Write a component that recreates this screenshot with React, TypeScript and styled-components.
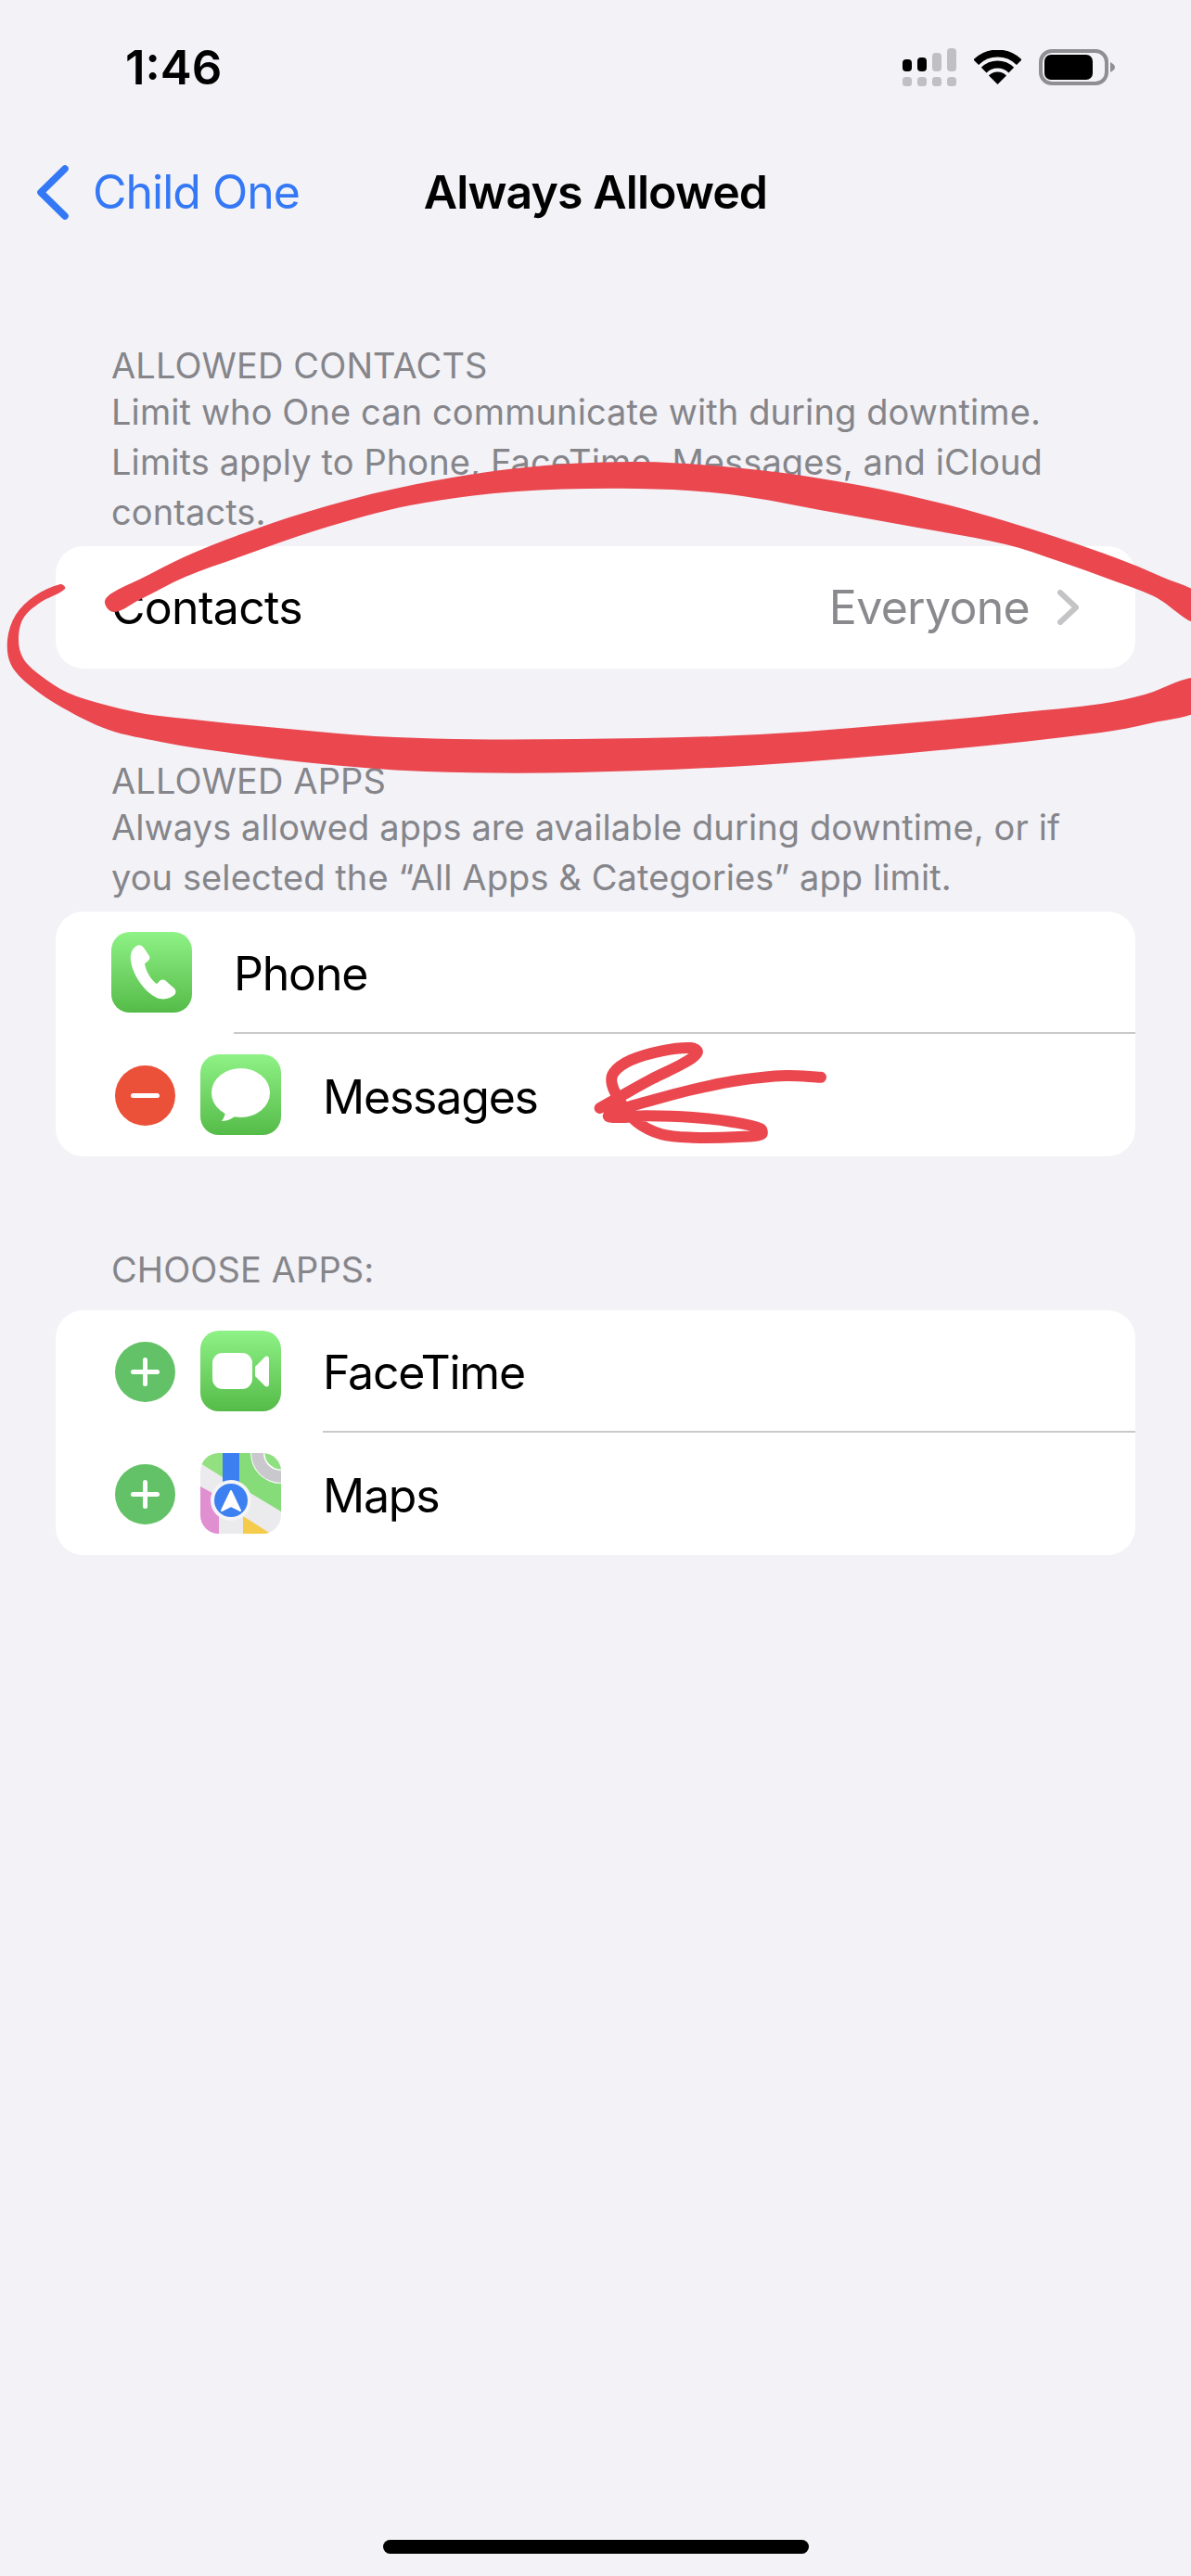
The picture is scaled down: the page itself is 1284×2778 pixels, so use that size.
import React from "react";
import styled, { createGlobalStyle } from "styled-components";

const Global = createGlobalStyle`
  html, body { margin: 0; padding: 0; background: #f2f2f7; }
  body { font-family: Inter, "Liberation Sans", sans-serif; -webkit-font-smoothing: antialiased; }
`;

const Page = styled.div`
  position: relative;
  width: 1284px;
  height: 2778px;
  overflow: hidden;
  background: #f2f2f7;
  color: #000;
`;

const StatusBar = styled.div`
  height: 144px;
  display: flex;
  align-items: center;
  justify-content: space-between;
  padding: 0 82px 0 135px;
  box-sizing: border-box;
`;

const Time = styled.div`
  font-size: 51px;
  font-weight: 600;
`;

const StatusIcons = styled.div`
  display: flex;
  align-items: center;
  gap: 19px;
`;

const Nav = styled.div`
  height: 126px;
  display: grid;
  grid-template-columns: 1fr auto 1fr;
  align-items: center;
`;

const Back = styled.div`
  display: flex;
  align-items: center;
  gap: 26px;
  padding-left: 39px;
  font-size: 50px;
  letter-spacing: -1px;
  color: #3478f6;
`;

const Title = styled.div`
  font-size: 50px;
  font-weight: 600;
  letter-spacing: -0.9px;
`;

const Section = styled.section<{ $top: number }>`
  margin-top: ${(p) => p.$top}px;
`;

const Heading = styled.div<{ $gap?: number }>`
  padding-left: 120px;
  font-size: 38px;
  line-height: 48px;
  letter-spacing: 0.1px;
  color: #85858a;
  margin-bottom: ${(p) => p.$gap ?? -1}px;
`;

const Description = styled.div`
  padding-left: 120px;
  font-size: 38px;
  line-height: 54px;
  letter-spacing: 0.1px;
  color: #85858a;
  margin-bottom: 10px;
`;

const Card = styled.div`
  margin: 0 60px;
  background: #fff;
  border-radius: 30px;
  overflow: hidden;
`;

const ContactRow = styled.div`
  height: 132px;
  display: flex;
  align-items: center;
  justify-content: space-between;
  padding: 0 61px 0 60px;
  font-size: 50px;
  letter-spacing: -0.7px;
`;

const Value = styled.div`
  display: flex;
  align-items: center;
  gap: 30px;
  color: #8a8a8e;
`;

const Row = styled.div`
  height: 132px;
  display: flex;
  align-items: center;
  padding-left: 60px;
  font-size: 50px;
  letter-spacing: -1.2px;
`;

const RowBody = styled.div<{ $divided?: boolean }>`
  flex: 1;
  align-self: stretch;
  display: flex;
  align-items: center;
  margin-left: 45px;
  padding-top: 3px;
  box-sizing: border-box;
  border-bottom: ${(p) => (p.$divided ? "2px solid #c9c9cc" : "none")};
`;

const Badge = styled.div<{ $color: string; $plus?: boolean }>`
  position: relative;
  flex: none;
  width: 65px;
  height: 65px;
  margin: 0 27px 0 4px;
  border-radius: 50%;
  background: ${(p) => p.$color};

  &::before {
    content: "";
    position: absolute;
    left: 17px;
    top: 30px;
    width: 31px;
    height: 5px;
    border-radius: 3px;
    background: #fff;
  }

  &::after {
    content: "";
    display: ${(p) => (p.$plus ? "block" : "none")};
    position: absolute;
    left: 30px;
    top: 17px;
    width: 5px;
    height: 31px;
    border-radius: 3px;
    background: #fff;
  }
`;

const AppIcon = styled.svg`
  flex: none;
  width: 87px;
  height: 87px;
  display: block;
  margin-bottom: 1px;
`;

const Overlay = styled.svg`
  position: absolute;
  left: 0;
  top: 0;
  pointer-events: none;
`;

const HomeBar = styled.div`
  position: absolute;
  left: 413px;
  top: 2739px;
  width: 459px;
  height: 15px;
  border-radius: 8px;
  background: #000;
`;

type P = [number, number];

const smooth = (pts: P[], closed: boolean): string => {
  const n = pts.length;
  const at = (i: number): P =>
    closed ? pts[(i + n) % n] : pts[Math.max(0, Math.min(n - 1, i))];
  const dir = (a: P, b: P): P => {
    const l = Math.hypot(b[0] - a[0], b[1] - a[1]) || 1;
    return [(b[0] - a[0]) / l, (b[1] - a[1]) / l];
  };
  let d = `M${pts[0][0]} ${pts[0][1]}`;
  const last = closed ? n : n - 1;
  for (let i = 0; i < last; i++) {
    const a = at(i - 1), b = at(i), c = at(i + 1), e = at(i + 2);
    const len = Math.hypot(c[0] - b[0], c[1] - b[1]) / 3;
    const t1 = dir(a, c), t2 = dir(b, e);
    d += ` C${(b[0] + t1[0] * len).toFixed(1)} ${(b[1] + t1[1] * len).toFixed(1)} ${(c[0] - t2[0] * len).toFixed(1)} ${(c[1] - t2[1] * len).toFixed(1)} ${c[0]} ${c[1]}`;
  }
  return d + (closed ? " Z" : "");
};

const UPPER: P[] = [
  [113, 650], [120, 640], [150, 625], [200, 600], [260, 576], [328, 553], [426, 527], [557, 505],
  [688, 498], [819, 507], [925, 523], [1024, 545], [1084, 562], [1144, 581], [1204, 602], [1250, 621],
  [1300, 646], [1300, 675], [1244, 643], [1197, 625], [1144, 606], [1084, 587], [995, 570], [901, 553],
  [786, 533], [688, 527], [557, 530], [442, 545], [344, 571], [260, 600], [200, 622], [150, 647], [123, 660],
];

const LOWER: P[] = [
  [70, 635], [65, 630], [37, 643], [17, 663], [8, 690], [12, 717], [33, 740], [67, 763], [117, 787],
  [173, 800], [213, 807], [328, 822], [459, 832], [622, 833], [819, 825], [1024, 808], [1187, 790],
  [1240, 780], [1300, 762], [1300, 731], [1234, 749], [1187, 759], [1084, 770], [1024, 776], [819, 792], [622, 797],
  [426, 795], [246, 780], [200, 775], [157, 770], [113, 760], [73, 747], [43, 728], [25, 710], [20, 690],
  [25, 667], [43, 650],
];

const SCRIBBLE: P[] = ([
  [765, 155], [650, 150], [500, 165], [350, 195], [200, 235], [110, 262], [80, 283], [200, 280], [350, 285],
  [480, 300], [570, 322], [572, 340], [500, 348], [350, 350], [250, 340], [170, 300], [120, 240], [90, 180],
  [95, 140], [150, 100], [250, 70], [345, 60], [365, 75], [320, 110], [220, 160], [120, 215], [50, 255],
] as P[]).map(([x, y]) => [630 + x / 3, Math.round((1110 + y / 3) * 10) / 10] as P);

const CellIcon = () => (
  <svg width="58" height="41" viewBox="0 0 58 41">
    <rect x="0" y="12" width="10" height="13" rx="4" fill="#000" />
    <rect x="16" y="10" width="10" height="15" rx="4" fill="#000" />
    <rect x="32" y="5" width="10" height="20" rx="4" fill="#c0c0c4" />
    <rect x="48" y="0" width="10" height="25" rx="4" fill="#c0c0c4" />
    {[0, 16, 32, 48].map((x) => (
      <rect key={x} x={x} y="31" width="10" height="10" rx="3.5" fill="#c0c0c4" />
    ))}
  </svg>
);

const WifiIcon = () => (
  <svg width="51" height="37" viewBox="0 0 51 37">
    <path d="M2.2 13.2A33 33 0 0 1 48.8 13.2" fill="none" stroke="#000" strokeWidth="8" />
    <path d="M10.7 21.7A21 21 0 0 1 40.3 21.7" fill="none" stroke="#000" strokeWidth="8" />
    <path d="M25.5 37L16 27.5A13.5 13.5 0 0 1 35 27.5Z" fill="#000" />
  </svg>
);

const BatteryIcon = () => (
  <svg width="82" height="39" viewBox="0 0 82 39">
    <rect x="2" y="2" width="71" height="35" rx="12" fill="none" stroke="#8e8e93" strokeWidth="4" />
    <rect x="6" y="6" width="52" height="27" rx="7" fill="#000" />
    <path d="M77 14L80 16Q82 17.5 82 19.5Q82 21.5 80 23L77 25Z" fill="#8e8e93" />
  </svg>
);

const Grad = ({ id }: { id: string }) => (
  <defs>
    <linearGradient id={id} x1="0" y1="0" x2="0" y2="1">
      <stop offset="0" stopColor="#8ef286" />
      <stop offset="1" stopColor="#55bb48" />
    </linearGradient>
  </defs>
);

const PhoneIcon = () => (
  <AppIcon viewBox="0 0 87 87">
    <Grad id="g-phone" />
    <rect width="87" height="87" rx="20" fill="url(#g-phone)" />
    <path
      d="M26 16C23 18 20 23 21 31C23 46 35 64 49 71C56 74 63 72 68 68C70 66 70 63 68 61L59 53C57 51 54 51 52 53L49 56C43 52 37 42 36 34L39 32C41 30 42 28 41 26L35 17C33 14 29 13 26 16Z"
      fill="#fff"
    />
  </AppIcon>
);

const MessagesIcon = () => (
  <AppIcon viewBox="0 0 87 87">
    <Grad id="g-msg" />
    <rect width="87" height="87" rx="20" fill="url(#g-msg)" />
    <ellipse cx="43.5" cy="41.5" rx="31.5" ry="26.5" fill="#fff" />
    <path d="M27 60C27 66 25 69 23 72C29 72 35 69 38 66Z" fill="#fff" />
  </AppIcon>
);

const FaceTimeIcon = () => (
  <AppIcon viewBox="0 0 87 87">
    <Grad id="g-ft" />
    <rect width="87" height="87" rx="20" fill="url(#g-ft)" />
    <rect x="13" y="24" width="43" height="39" rx="11" fill="#fff" />
    <path d="M59 39L70 28C72 27 74 28 74 30V58C74 60 72 61 70 60L59 49Z" fill="#fff" />
  </AppIcon>
);

const MapsIcon = () => (
  <AppIcon viewBox="0 0 87 87">
    <defs>
      <clipPath id="maps-clip">
        <rect width="87" height="87" rx="20" />
      </clipPath>
    </defs>
    <g clipPath="url(#maps-clip)">
      <rect width="87" height="87" fill="#ebebee" />
      <path d="M0 0H24V26L0 11Z" fill="#92e07f" />
      <path d="M42 0H87V63L47 39L42 36Z" fill="#86dc78" />
      <circle cx="87" cy="0" r="33" fill="#fff" />
      <circle cx="87" cy="0" r="32" fill="#c9c9cd" />
      <circle cx="87" cy="0" r="19" fill="#fff" />
      <circle cx="87" cy="0" r="17.5" fill="#8fe080" />
      <path d="M0 36L20 47V87H0Z" fill="#e08fd0" />
      <path d="M46 68L76 87H46Z" fill="#f5cb4c" />
      <rect x="24" y="0" width="18" height="40" fill="#3c7ff0" />
      <circle cx="33" cy="51" r="22" fill="#f4f4f6" />
      <circle cx="33" cy="51" r="18" fill="#3c80f2" />
      <path d="M33 41L43 62L33 57L23 62Z" fill="#fff" stroke="#fff" strokeWidth="2" strokeLinejoin="round" />
    </g>
  </AppIcon>
);

export default function App() {
  return (
    <Page>
      <Global />
      <StatusBar>
        <Time>1:46</Time>
        <StatusIcons>
          <CellIcon />
          <WifiIcon />
          <BatteryIcon />
        </StatusIcons>
      </StatusBar>
      <Nav>
        <Back>
          <svg width="35" height="59" viewBox="0 0 35 59">
            <path d="M31 4L5 29.5L31 55" fill="none" stroke="#3478f6" strokeWidth="7.5" strokeLinecap="round" strokeLinejoin="round" />
          </svg>
          Child One
        </Back>
        <Title>Always Allowed</Title>
        <div />
      </Nav>

      <Section $top={100}>
        <Heading>ALLOWED CONTACTS</Heading>
        <Description>
          Limit who One can communicate with during downtime.
          <br />
          Limits apply to Phone, FaceTime, Messages, and iCloud
          <br />
          contacts.
        </Description>
        <Card>
          <ContactRow>
            Contacts
            <Value>
              Everyone
              <svg width="23" height="38" viewBox="0 0 23 38">
                <path d="M3 3L20 19L3 35" fill="none" stroke="#c4c4c7" strokeWidth="6" strokeLinecap="round" strokeLinejoin="round" />
              </svg>
            </Value>
          </ContactRow>
        </Card>
      </Section>

      <Section $top={97}>
        <Heading>ALLOWED APPS</Heading>
        <Description>
          Always allowed apps are available during downtime, or if
          <br />
          you selected the “All Apps &amp; Categories” app limit.
        </Description>
        <Card>
          <Row>
            <PhoneIcon />
            <RowBody $divided>Phone</RowBody>
          </Row>
          <Row>
            <Badge $color="#eb5039" />
            <MessagesIcon />
            <RowBody>Messages</RowBody>
          </Row>
        </Card>
      </Section>

      <Section $top={98}>
        <Heading $gap={20}>CHOOSE APPS:</Heading>
        <Card>
          <Row>
            <Badge $color="#63c267" $plus />
            <FaceTimeIcon />
            <RowBody $divided>FaceTime</RowBody>
          </Row>
          <Row>
            <Badge $color="#63c267" $plus />
            <MapsIcon />
            <RowBody>Maps</RowBody>
          </Row>
        </Card>
      </Section>

      <HomeBar />

      <Overlay width="1284" height="2778" viewBox="0 0 1284 2778">
        <path d={smooth(UPPER, true)} fill="#ea474f" />
        <path d={smooth(LOWER, true)} fill="#ea474f" />
        <path d={smooth(SCRIBBLE, false)} fill="none" stroke="#ea474f" strokeWidth="12" strokeLinecap="round" strokeLinejoin="round" />
      </Overlay>
    </Page>
  );
}
